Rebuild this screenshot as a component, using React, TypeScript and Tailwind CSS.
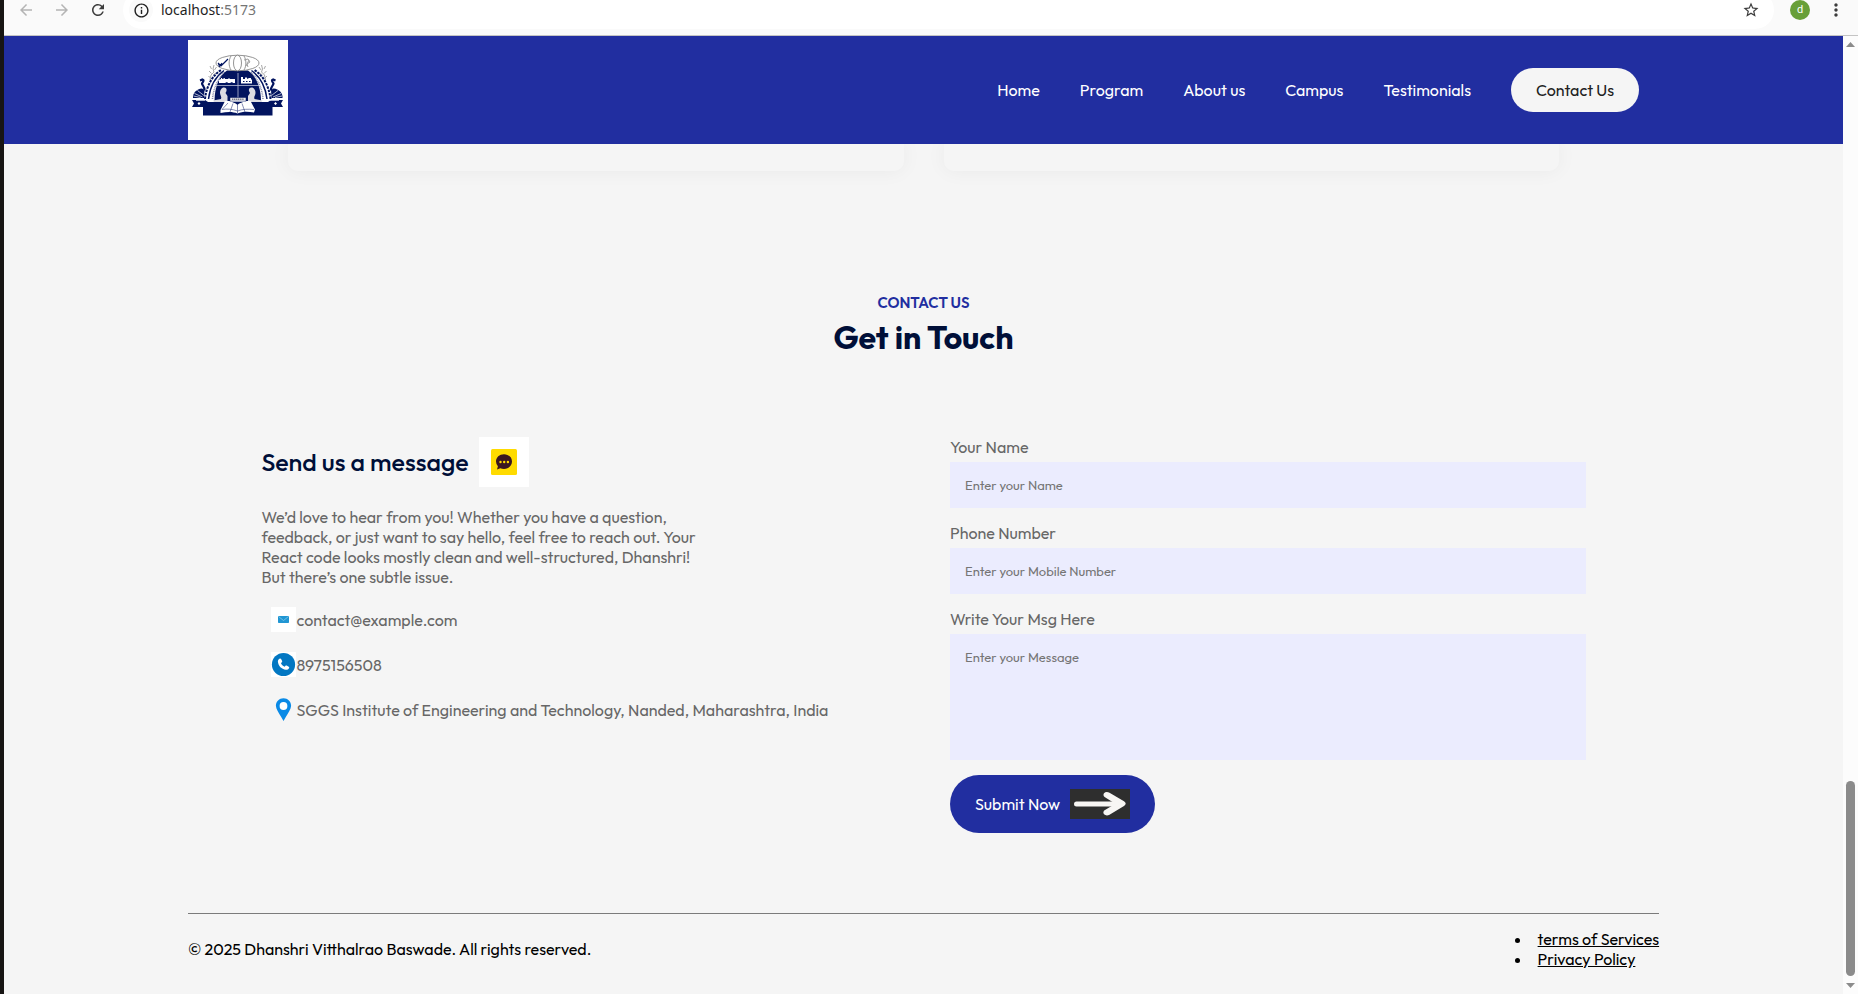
import React from "react";
import {
  MdArrowBack,
  MdArrowForward,
  MdMoreVert,
  MdOutlineInfo,
  MdRefresh,
  MdStarBorder,
} from "react-icons/md";

const navItems = ["Home", "Program", "About us", "Campus", "Testimonials"];

function BrowserBar() {
  return (
    <div className="h-9 overflow-hidden border-b border-[#c4c4c4] bg-[#fafafa]">
      <div className="flex h-5 items-center pr-3 pl-[13px]">
        <button aria-label="Back" className="text-[#b4b4b4]">
          <MdArrowBack size={18} />
        </button>
        <button aria-label="Forward" className="ml-[18px] text-[#b4b4b4]">
          <MdArrowForward size={18} />
        </button>
        <button aria-label="Reload" className="ml-[18px] text-[#3c3c3c]">
          <MdRefresh size={18} />
        </button>
        <div className="ml-4 flex h-[38px] flex-1 items-center rounded-full bg-white px-1.5">
          <button
            aria-label="Site information"
            className="flex size-6 items-center justify-center rounded-full bg-[#fafafa] text-[#1f1f1f]"
          >
            <MdOutlineInfo size={17} />
          </button>
          <span className="ml-2 flex-1 font-['Noto_Sans','Open_Sans',sans-serif] text-sm text-[#1f1f1f]">
            localhost<span className="text-[#757575]">:5173</span>
          </span>
          <button aria-label="Bookmark" className="mr-2 text-[#3c3c3c]">
            <MdStarBorder size={18} />
          </button>
        </div>
        <button className="ml-4 size-5 rounded-full bg-[#689f38] text-center font-['Roboto',sans-serif] text-[11px] leading-5 text-white">
          d
        </button>
        <button aria-label="Menu" className="ml-4 text-[#3c3c3c]">
          <MdMoreVert size={20} />
        </button>
      </div>
    </div>
  );
}

function HalfCrest() {
  return (
    <g>
      {/* peacock */}
      <path d="M12 40.500l2.500-1c2 .5.500 2.500-.5 4 0 2 3 3 2.500 7" fill="none" stroke="#02145f" strokeWidth="2.200" />
      <path d="M5 58c-.5-5 3.500-9 9-9.500l2.500 1.500-.5 8z" fill="#02145f" />
      <path d="M6.500 53.500l8 3.500M9.500 50.500l6.500 5M5.500 56l7 1.500" stroke="#fff" strokeWidth=".7" fill="none" />
      {/* wheat */}
      <path
        d="M26 25l-1 4 1 3-3 3-1 5M22 26l1.500 3M28.500 27l-2 3M21 31l2.500 2.500M28 33l-3 2M20.500 36l2 2"
        stroke="#a8a8a8"
        strokeWidth="1"
        fill="none"
      />
      {/* arches */}
      <path d="M17 59C18.500 46 24 36 33 30" stroke="#02145f" strokeWidth="2" strokeDasharray="2.500 1" fill="none" />
      <path d="M20.500 59C22 47 27 37 36 30.500" stroke="#02145f" strokeWidth="1.500" fill="none" />
      <path d="M24.500 59C25.500 48 30 38 37 32" stroke="#8a8fae" strokeWidth="1.600" strokeDasharray="1 .8" fill="none" />
    </g>
  );
}

function Crest() {
  return (
    <svg viewBox="0 0 100 100" className="size-[100px] bg-white" role="img" aria-label="Institute crest">
      <HalfCrest />
      <g transform="translate(99.500 0) scale(-1 1)">
        <HalfCrest />
      </g>
      <path d="M26.500 61C26.500 46 32 35 39 30.500h21C67 35 73 46 73 61z" fill="#02145f" />
      <g fill="#fff" stroke="#7a7a7a" strokeWidth=".8">
        <ellipse cx="49.500" cy="23" rx="21.500" ry="7.800" />
        <ellipse cx="49.500" cy="23" rx="4" ry="7.800" />
        <path d="M43 16c-2.500 4-2.500 10 0 14M56 16c2.500 4 2.500 10 0 14" fill="none" />
      </g>
      <path d="M30 23l3 3 4-4 3-3M31 27l3-4M30 25l4-1" stroke="#02145f" strokeWidth="1.200" fill="none" />
      <path d="M56 20l4-1 2 3-3 2 1 3M58 26l3-6" stroke="#a0a0a0" strokeWidth="1" fill="none" />
      {/* train and factory */}
      <path d="M31 43v-3l2-1v-1h1v1l3-1v1h3l1-1 1 1h5v4h-2l-1-1-2 1h-2l-1-1-2 1z" fill="#fff" />
      <path d="M53 43.500V37h2v2h2v-1.500h2V39l2-1h2v1.500h1v4z" fill="#fff" />
      <path d="M55 41.500h1.500M58 41.500h1.500M61 41.500h1.500" stroke="#02145f" strokeWidth="1" />
      <path d="M28 45.500h43M50 33v25" stroke="#b9bed6" strokeWidth=".8" />
      {/* seated figures */}
      <g fill="#dcdce2">
        <path d="M36 47.500c2 0 3 1.500 2.500 3.500l-1 2 2 3v6H26l-1-1.500 8-1.500c1-2-1-4-1-6 0-3 1.500-5.500 4-5.500z" />
        <path d="M63.500 47.500c-2 0-3 1.500-2.500 3.500l1 2-2 3v6h13.500l1-1.500-8-1.500c-1-2 1-4 1-6 0-3-1.500-5.500-4-5.500z" />
      </g>
      {/* ribbon */}
      <path d="M4 60h13l3 2h60l3-2h12l-2 3.500 2 3.500H84.500v8.500h-69.500V67H4l2-3.500z" fill="#02145f" />
      <path d="M11 62l1.500 1.500L11 65l-1.500-1.500zM87.500 62l1.500 1.500-1.500 1.500-1.500-1.500z" fill="#fff" />
      <path d="M8 60.500h9M82 60.500h9" stroke="#fff" strokeWidth=".7" />
      {/* book */}
      <path d="M37 61c5 0 10 1.500 12.500 4 2.500-2.500 8-4 13-4l4.500 8.500-1 3c-6-1-12-1-16.500 1-4.500-2-10-2-17-.5v-3z" fill="#fff" />
      <path
        d="M49.500 65v8M45 63.500l-3 8.500M54 63.500l3 8.500M40 63l-6 6.500c5-.8 10-.5 15.500 1.500 5-2 11-2 16.500-1.500"
        stroke="#33407f"
        strokeWidth=".6"
        fill="none"
      />
      <rect x="42" y="57.500" width="16" height="3.600" fill="#ececec" stroke="#02145f" strokeWidth=".5" />
      <path d="M44 59.300h12" stroke="#77798a" strokeWidth="1.400" strokeDasharray="1.300 .6" />
    </svg>
  );
}

function Header() {
  return (
    <header className="flex items-center justify-between bg-[#212ea0] px-[10%] py-1">
      <Crest />
      <nav>
        <ul className="mr-5 flex items-center gap-10 text-base text-white">
          {navItems.map((item) => (
            <li key={item}>
              <a href="#">{item}</a>
            </li>
          ))}
          <li>
            <button className="rounded-full bg-[#f5f5f5] px-[25px] py-2.5 text-[#212121]">Contact Us</button>
          </li>
        </ul>
      </nav>
    </header>
  );
}

function MessageIcon() {
  return (
    <svg viewBox="0 0 50 50" className="size-[50px] bg-white" aria-hidden="true">
      <rect x="12" y="12" width="26" height="26" rx="1.500" fill="#ffdb00" />
      <path d="M25 17.200c4.600 0 8 3.200 8 7.300s-3.400 7.400-8 7.400c-1.400 0-2.600-.3-3.700-.7l-3.300 1.300.9-3.300a7 7 0 0 1-1.900-4.700c0-4.100 3.400-7.300 8-7.300z" fill="#3b1620" />
      <g fill="#ffdb00">
        <circle cx="21.500" cy="25" r="1.200" />
        <circle cx="25.200" cy="25" r="1.200" />
        <circle cx="28.900" cy="25" r="1.200" />
      </g>
    </svg>
  );
}

function MailIcon() {
  return (
    <svg viewBox="0 0 25 25" className="size-[25px] bg-white" aria-hidden="true">
      <rect x="7" y="9" width="11" height="7" rx=".8" fill="#2196d3" />
      <path d="M7.500 9.500l5 4 5-4" stroke="#8fd0ec" strokeWidth=".7" fill="none" />
    </svg>
  );
}

function PhoneIcon() {
  return (
    <svg viewBox="0 0 25 25" className="size-[25px] bg-white" aria-hidden="true">
      <circle cx="12.500" cy="12.500" r="11.600" fill="#0277c2" />
      <path
        d="M8.500 6.700c.6-.5 1.300-.3 1.600.3l1 2c.3.600.1 1.100-.4 1.500l-.8.600c.7 1.700 1.900 2.900 3.700 3.700l.7-.9c.4-.4.900-.5 1.400-.3l2 1.100c.6.300.7 1 .3 1.500-.8 1.200-1.800 1.700-3.100 1.600-4.500-.6-7.500-3.700-8-8-.1-1.300.5-2.400 1.600-3.100z"
        fill="#fff"
      />
    </svg>
  );
}

function PinIcon() {
  return (
    <svg viewBox="0 0 25 25" className="size-[25px]" aria-hidden="true">
      <path
        d="M12.500 1.200c4.300 0 7.600 3.200 7.600 7.500 0 3.400-2.900 7.200-5.300 11.200l-2.300 4-2.300-4C7.800 15.900 4.900 12.100 4.900 8.700c0-4.300 3.300-7.500 7.600-7.500z"
        fill="#0a8ae6"
      />
      <circle cx="12.500" cy="9" r="3.900" fill="#fff" />
    </svg>
  );
}

function ArrowIcon() {
  return (
    <svg viewBox="0 0 60 30" className="h-[30px] w-[60px] bg-[#2e2e2e]" aria-hidden="true">
      <path d="M6.500 15h40" stroke="#f8f6f4" strokeWidth="5" strokeLinecap="round" />
      <path
        d="M34 4.200c1.500-1.600 3.700-1.400 5.500-.4l14.500 8.500c2.300 1.500 2.300 3 0 4.600l-14.500 8.800c-1.800 1-4 1-5.500-.4-1.200-1.600-.7-3.200 1-4.200l7.500-4.500v-3.600L35 8.200c-1.500-1-2-2.500-1-4z"
        fill="#f8f6f4"
      />
    </svg>
  );
}

const details = [
  { Icon: MailIcon, text: "contact@example.com" },
  { Icon: PhoneIcon, text: "8975156508" },
  { Icon: PinIcon, text: "SGGS Institute of Engineering and Technology, Nanded, Maharashtra, India" },
];

function TestimonialCards() {
  return (
    <div className="flex gap-10 overflow-hidden px-[100px] pb-5">
      <div className="h-[27px] flex-1 rounded-b-[10px] shadow-[0_0_20px_rgba(0,0,0,0.05)]" />
      <div className="h-[27px] flex-1 rounded-b-[10px] shadow-[0_0_20px_rgba(0,0,0,0.05)]" />
    </div>
  );
}

function ContactInfo() {
  return (
    <div className="w-[48%]">
      <h3 className="flex items-center gap-2.5 text-[25px] leading-8 font-medium text-[#000f38]">
        Send us a message
        <MessageIcon />
      </h3>
      <p className="mt-5 max-w-[450px]">
        We’d love to hear from you! Whether you have a question, feedback, or just want to say hello, feel free to
        reach out. Your React code looks mostly clean and well-structured, Dhanshri! But there’s one subtle issue.
      </p>
      <ul className="mt-5 ml-2.5 flex flex-col gap-5">
        {details.map(({ Icon, text }) => (
          <li key={text} className="flex items-center whitespace-nowrap">
            <Icon />
            {text}
          </li>
        ))}
      </ul>
    </div>
  );
}

const fieldClass =
  "mt-[5px] mb-[15px] block w-full resize-none bg-[#ebecfe] p-[15px] text-[13px] leading-4 outline-none placeholder:text-[#757575]";

function ContactForm() {
  return (
    <form className="w-[48%]" onSubmit={(event) => event.preventDefault()}>
      <label htmlFor="name" className="block">
        Your Name
      </label>
      <input id="name" type="text" placeholder="Enter your Name" className={fieldClass} />
      <label htmlFor="phone" className="block">
        Phone Number
      </label>
      <input id="phone" type="tel" placeholder="Enter your Mobile Number" className={fieldClass} />
      <label htmlFor="message" className="block">
        Write Your Msg Here
      </label>
      <textarea id="message" rows={6} placeholder="Enter your Message" className={fieldClass} />
      <button type="submit" className="flex items-center gap-2.5 rounded-full bg-[#212ea0] px-[25px] py-3.5 text-white">
        Submit Now
        <ArrowIcon />
      </button>
    </form>
  );
}

function ScrollBar() {
  return (
    <div className="flex w-[15px] flex-col items-center bg-[#fcfcfc] py-1.5" aria-hidden="true">
      <svg viewBox="0 0 9 5" className="h-[5px] w-[9px]">
        <path d="M0 5L4.500 0 9 5z" fill="#8b8b8b" />
      </svg>
      <div className="flex flex-1 flex-col justify-end pb-[7px]">
        <div className="h-[21%] w-[9px] rounded-full bg-[#8b8b8b]" />
      </div>
      <svg viewBox="0 0 9 5" className="h-[5px] w-[9px]">
        <path d="M0 0h9L4.500 5z" fill="#8b8b8b" />
      </svg>
    </div>
  );
}

export default function App() {
  return (
    <div className="flex min-h-screen flex-col border-l-4 border-[#171513] bg-[#f5f5f5]">
      <BrowserBar />
      <div className="flex flex-1">
        <div className="min-w-0 flex-1 font-['Outfit','Lato',sans-serif] text-base leading-5 text-black">
          <Header />
          <main className="px-[10%]">
            <TestimonialCards />
            <div className="mt-[102px] text-center">
              <p className="text-[15px] leading-5 font-semibold text-[#212ea0]">CONTACT US</p>
              <h2 className="mt-1 text-[32px] leading-10 font-bold text-[#000f38]">Get in Touch</h2>
            </div>
            <section className="mx-auto mt-20 flex w-[90%] justify-between text-[#676767]">
              <ContactInfo />
              <ContactForm />
            </section>
          </main>
          <footer className="mx-[10%] mt-20 flex items-center justify-between border-t border-[#7b7b7b] pt-[15px] pb-6">
            <p>© 2025 Dhanshri Vitthalrao Baswade. All rights reserved.</p>
            <ul className="list-disc">
              <li className="pl-1.5">
                <a href="#" className="underline">
                  terms of Services
                </a>
              </li>
              <li className="pl-1.5">
                <a href="#" className="underline">
                  Privacy Policy
                </a>
              </li>
            </ul>
          </footer>
        </div>
        <ScrollBar />
      </div>
    </div>
  );
}
